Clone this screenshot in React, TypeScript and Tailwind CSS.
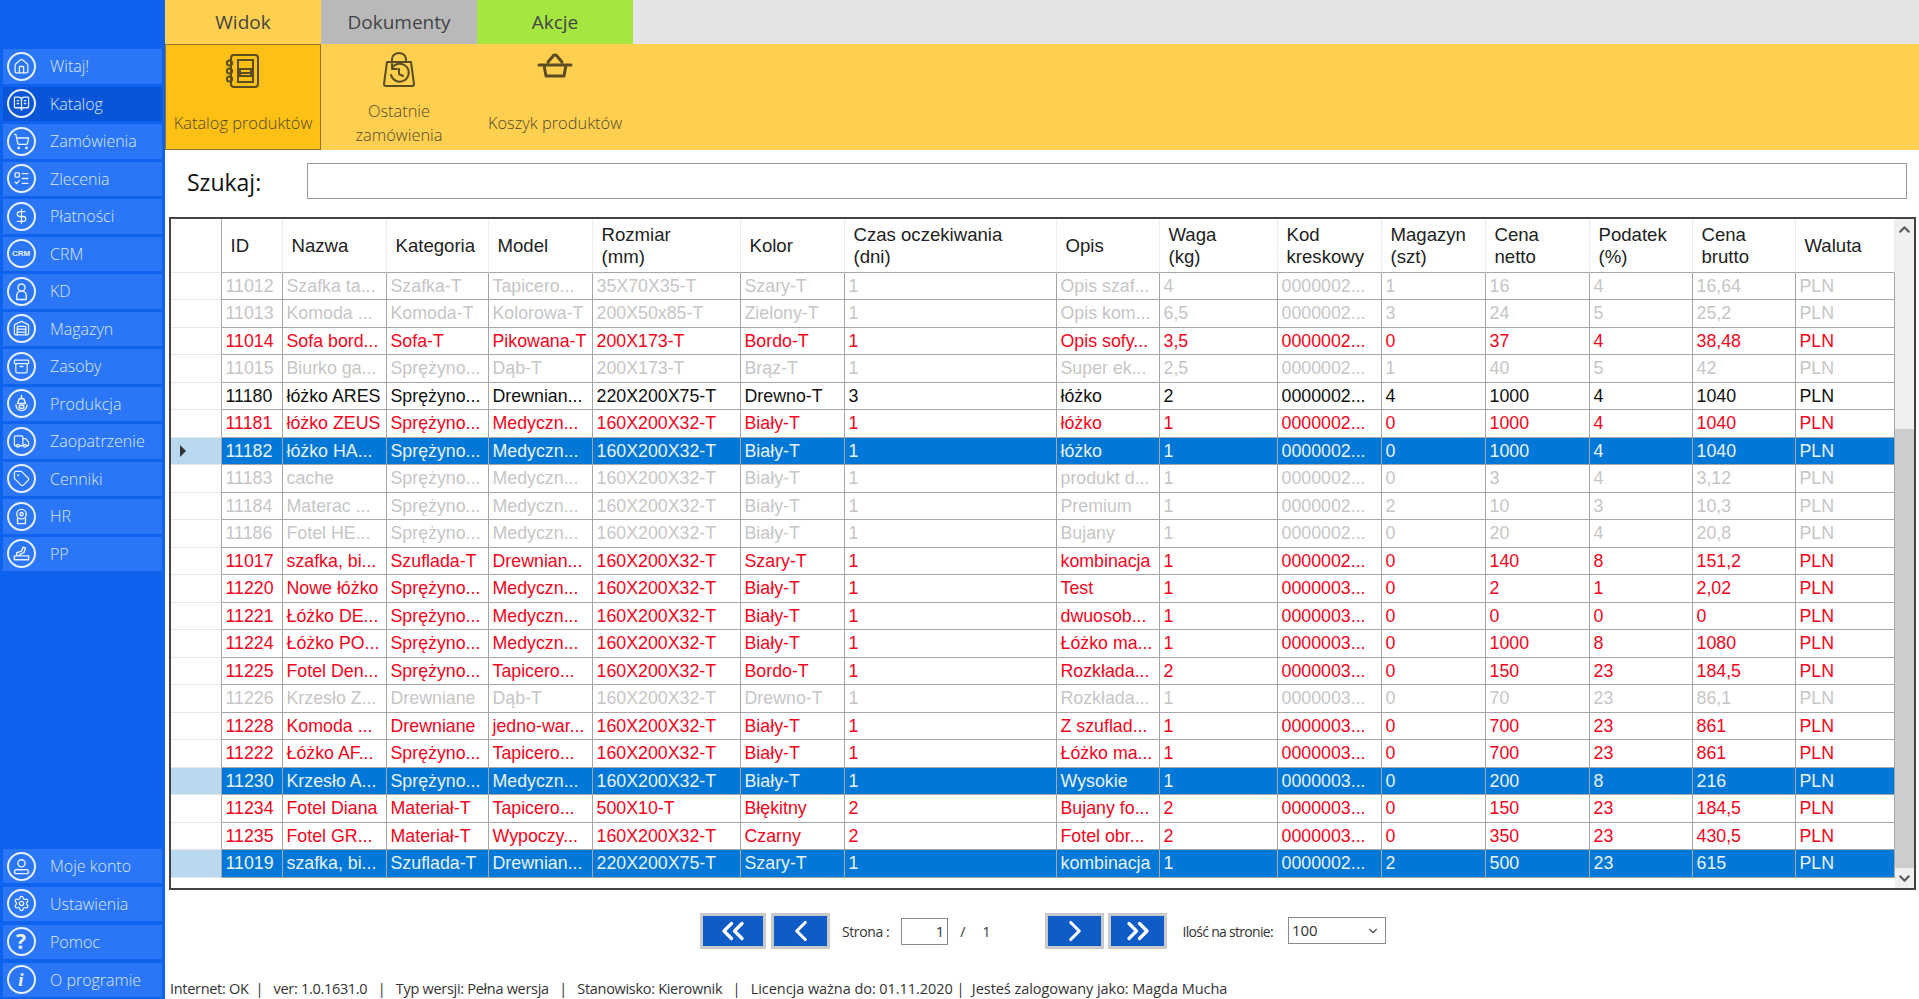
import type { ReactNode } from 'react';
import {
  Archive, BookOpenText, ChevronDown, ChevronLeft, ChevronRight, ChevronUp, ChevronsLeft, ChevronsRight,
  DollarSign, House, ListTodo, Settings, ShoppingCart, Tag, Truck, Warehouse,
} from 'lucide-react';

const gridCols =
  'grid grid-cols-[51px_61px_104px_102px_104px_148px_104px_212px_103px_118px_104px_104px_104px_103px_103px_99px]';

const headers = [
  'ID', 'Nazwa', 'Kategoria', 'Model', 'Rozmiar\n(mm)', 'Kolor', 'Czas oczekiwania\n(dni)', 'Opis', 'Waga\n(kg)',
  'Kod\nkreskowy', 'Magazyn\n(szt)', 'Cena\nnetto', 'Podatek\n(%)', 'Cena\nbrutto', 'Waluta',
];

type Tone = 'gray' | 'red' | 'black' | 'sel';

const S = 'Sprężyno...';
const M = 'Medyczn...';
const R = '160X200X32-T';
const K2 = '0000002...';
const K3 = '0000003...';

const rows: { tone: Tone; cur?: boolean; c: string[] }[] = [
  { tone: 'gray', c: ['11012', 'Szafka ta...', 'Szafka-T', 'Tapicero...', '35X70X35-T', 'Szary-T', '1', 'Opis szaf...', '4', K2, '1', '16', '4', '16,64', 'PLN'] },
  { tone: 'gray', c: ['11013', 'Komoda ...', 'Komoda-T', 'Kolorowa-T', '200X50x85-T', 'Zielony-T', '1', 'Opis kom...', '6,5', K2, '3', '24', '5', '25,2', 'PLN'] },
  { tone: 'red', c: ['11014', 'Sofa bord...', 'Sofa-T', 'Pikowana-T', '200X173-T', 'Bordo-T', '1', 'Opis sofy...', '3,5', K2, '0', '37', '4', '38,48', 'PLN'] },
  { tone: 'gray', c: ['11015', 'Biurko ga...', S, 'Dąb-T', '200X173-T', 'Brąz-T', '1', 'Super ek...', '2,5', K2, '1', '40', '5', '42', 'PLN'] },
  { tone: 'black', c: ['11180', 'łóżko ARES', S, 'Drewnian...', '220X200X75-T', 'Drewno-T', '3', 'łóżko', '2', K2, '4', '1000', '4', '1040', 'PLN'] },
  { tone: 'red', c: ['11181', 'łóżko ZEUS', S, M, R, 'Biały-T', '1', 'łóżko', '1', K2, '0', '1000', '4', '1040', 'PLN'] },
  { tone: 'sel', cur: true, c: ['11182', 'łóżko HA...', S, M, R, 'Biały-T', '1', 'łóżko', '1', K2, '0', '1000', '4', '1040', 'PLN'] },
  { tone: 'gray', c: ['11183', 'cache', S, M, R, 'Biały-T', '1', 'produkt d...', '1', K2, '0', '3', '4', '3,12', 'PLN'] },
  { tone: 'gray', c: ['11184', 'Materac ...', S, M, R, 'Biały-T', '1', 'Premium', '1', K2, '2', '10', '3', '10,3', 'PLN'] },
  { tone: 'gray', c: ['11186', 'Fotel HE...', S, M, R, 'Biały-T', '1', 'Bujany', '1', K2, '0', '20', '4', '20,8', 'PLN'] },
  { tone: 'red', c: ['11017', 'szafka, bi...', 'Szuflada-T', 'Drewnian...', R, 'Szary-T', '1', 'kombinacja', '1', K2, '0', '140', '8', '151,2', 'PLN'] },
  { tone: 'red', c: ['11220', 'Nowe łóżko', S, M, R, 'Biały-T', '1', 'Test', '1', K3, '0', '2', '1', '2,02', 'PLN'] },
  { tone: 'red', c: ['11221', 'Łóżko DE...', S, M, R, 'Biały-T', '1', 'dwuosob...', '1', K3, '0', '0', '0', '0', 'PLN'] },
  { tone: 'red', c: ['11224', 'Łóżko PO...', S, M, R, 'Biały-T', '1', 'Łóżko ma...', '1', K3, '0', '1000', '8', '1080', 'PLN'] },
  { tone: 'red', c: ['11225', 'Fotel Den...', S, 'Tapicero...', R, 'Bordo-T', '1', 'Rozkłada...', '2', K3, '0', '150', '23', '184,5', 'PLN'] },
  { tone: 'gray', c: ['11226', 'Krzesło Z...', 'Drewniane', 'Dąb-T', R, 'Drewno-T', '1', 'Rozkłada...', '1', K3, '0', '70', '23', '86,1', 'PLN'] },
  { tone: 'red', c: ['11228', 'Komoda ...', 'Drewniane', 'jedno-war...', R, 'Biały-T', '1', 'Z szuflad...', '1', K3, '0', '700', '23', '861', 'PLN'] },
  { tone: 'red', c: ['11222', 'Łóżko AF...', S, 'Tapicero...', R, 'Biały-T', '1', 'Łóżko ma...', '1', K3, '0', '700', '23', '861', 'PLN'] },
  { tone: 'sel', c: ['11230', 'Krzesło A...', S, M, R, 'Biały-T', '1', 'Wysokie', '1', K3, '0', '200', '8', '216', 'PLN'] },
  { tone: 'red', c: ['11234', 'Fotel Diana', 'Materiał-T', 'Tapicero...', '500X10-T', 'Błękitny', '2', 'Bujany fo...', '2', K3, '0', '150', '23', '184,5', 'PLN'] },
  { tone: 'red', c: ['11235', 'Fotel GR...', 'Materiał-T', 'Wypoczy...', R, 'Czarny', '2', 'Fotel obr...', '2', K3, '0', '350', '23', '430,5', 'PLN'] },
  { tone: 'sel', c: ['11019', 'szafka, bi...', 'Szuflada-T', 'Drewnian...', '220X200X75-T', 'Szary-T', '1', 'kombinacja', '1', K2, '2', '500', '23', '615', 'PLN'] },
];

const toneClass: Record<Tone, string> = {
  gray: 'text-[#c6c6c6]',
  red: 'text-[#f5051c]',
  black: 'text-[#111111]',
  sel: 'bg-[#0078d7] text-[#e9f3fc]',
};

const ico = { size: 17, strokeWidth: 1.8 };

const Glyph = ({ children }: { children: ReactNode }) => (
  <svg viewBox="0 0 24 24" className="w-[19px] h-[19px]" fill="none" stroke="currentColor" strokeWidth="1.8" strokeLinecap="round" strokeLinejoin="round">
    {children}
  </svg>
);

const topNav: { label: string; icon: ReactNode; active?: boolean }[] = [
  { label: 'Witaj!', icon: <House {...ico} /> },
  { label: 'Katalog', icon: <BookOpenText {...ico} />, active: true },
  { label: 'Zamówienia', icon: <ShoppingCart {...ico} /> },
  { label: 'Zlecenia', icon: <ListTodo {...ico} /> },
  { label: 'Płatności', icon: <DollarSign {...ico} /> },
  { label: 'CRM', icon: <span className="text-[8px] font-bold leading-none [font-family:Liberation_Sans,sans-serif]">CRM</span> },
  {
    label: 'KD',
    icon: (
      <Glyph>
        <circle cx="12" cy="7" r="4.5" />
        <path d="M6 22v-5a6 5.500 0 0 1 12 0v5z" />
      </Glyph>
    ),
  },
  { label: 'Magazyn', icon: <Warehouse {...ico} /> },
  { label: 'Zasoby', icon: <Archive {...ico} /> },
  {
    label: 'Produkcja',
    icon: (
      <Glyph>
        <path d="M12 2v4M9 6h6l2 6H7z" />
        <path d="M5 14a7 7 0 0 0 14 0" />
        <ellipse cx="12" cy="16" rx="3" ry="2" />
      </Glyph>
    ),
  },
  { label: 'Zaopatrzenie', icon: <Truck {...ico} /> },
  { label: 'Cenniki', icon: <Tag {...ico} /> },
  {
    label: 'HR',
    icon: (
      <Glyph>
        <circle cx="12" cy="9" r="6" />
        <circle cx="12" cy="9" r="2" />
        <path d="M7 14v7h10v-7" />
      </Glyph>
    ),
  },
  {
    label: 'PP',
    icon: (
      <Glyph>
        <path d="M3 20v-5h18v5zM6 15v-4l6-2 2-5 3 1-2 6-5 2v2" />
      </Glyph>
    ),
  },
];

const bottomNav: { label: string; icon: ReactNode }[] = [
  {
    label: 'Moje konto',
    icon: (
      <Glyph>
        <circle cx="12" cy="8" r="4.500" />
        <path d="M4 21a3 3 0 0 1 3-5h10a3 3 0 0 1 3 5z" />
      </Glyph>
    ),
  },
  { label: 'Ustawienia', icon: <Settings {...ico} /> },
  { label: 'Pomoc', icon: <span className="text-[21px] font-bold leading-none">?</span> },
  { label: 'O programie', icon: <span className="text-[19px] italic font-bold leading-none [font-family:Liberation_Serif,serif]">i</span> },
];

function NavItem({ label, icon, active }: { label: string; icon: ReactNode; active?: boolean }) {
  return (
    <div className={`h-[34.5px] mx-[3px] flex items-center pl-[3.5px] gap-[14.5px] ${active ? 'bg-[#0a54d8]' : 'bg-[#2b76f6]'}`}>
      <div className="w-[29px] h-[29px] shrink-0 rounded-full border-2 border-[#e6efff] flex items-center justify-center text-[#eaf1ff]">
        {icon}
      </div>
      <span className="text-[16px] font-light text-[#dce8ff] whitespace-nowrap">{label}</span>
    </div>
  );
}

function PagerButton({ children, wide }: { children: ReactNode; wide?: boolean }) {
  return (
    <div className={`h-[36px] border-[3px] border-[#c9c9c9] bg-[#0f5cc7] flex items-center justify-center text-white ${wide ? 'w-[66px]' : 'w-[59px]'}`}>
      {children}
    </div>
  );
}

function RibbonTile({ label, icon, active }: { label: ReactNode; icon: ReactNode; active?: boolean }) {
  return (
    <div className={`w-[156px] h-full flex flex-col items-center ${active ? 'bg-[#fdc015] border border-[#8f7426]' : ''}`}>
      <div className="h-[52px] shrink-0 flex items-center justify-center text-[#5b4c22]">{icon}</div>
      <div className="flex-1 flex items-center justify-center text-center text-[16.4px] leading-[24px] font-light text-[#54492c] whitespace-nowrap">{label}</div>
    </div>
  );
}

export default function App() {
  return (
    <div className="w-[1919px] h-[999px] overflow-hidden flex bg-white [font-family:Open_Sans,sans-serif]">
      <aside className="w-[165px] shrink-0 h-full flex flex-col bg-[#0d63ee] pt-[49px] pb-[2px]">
        <nav className="flex flex-col gap-[3px]">
          {topNav.map((n) => (
            <NavItem key={n.label} {...n} />
          ))}
        </nav>
        <nav className="mt-auto flex flex-col gap-[3.4px]">
          {bottomNav.map((n) => (
            <NavItem key={n.label} {...n} />
          ))}
        </nav>
      </aside>

      <main className="flex-1 min-w-0 flex flex-col">
        <div className="h-[44px] shrink-0 flex bg-[#e4e4e4] text-[19px] text-[#444444]">
          <div className="w-[156px] bg-[#ffd04f] flex items-center justify-center">Widok</div>
          <div className="w-[156px] bg-[#b9b9b9] flex items-center justify-center">Dokumenty</div>
          <div className="w-[156px] bg-[#a5e640] flex items-center justify-center">Akcje</div>
        </div>

        <div className="h-[106px] shrink-0 flex bg-[#ffd04f]">
          <RibbonTile
            active
            label="Katalog produktów"
            icon={
              <svg viewBox="0 0 36 36" className="w-[36px] h-[36px]" fill="none" stroke="currentColor" strokeWidth="2">
                <rect x="6" y="2" width="27" height="32" rx="3" />
                <circle cx="4.5" cy="10" r="2.6" />
                <circle cx="4.5" cy="18" r="2.6" />
                <circle cx="4.5" cy="26" r="2.6" />
                <rect x="13" y="7" width="15" height="22" />
                <path d="M15 20v-4h11v4M15 20h11v3H15z" />
              </svg>
            }
          />
          <RibbonTile
            label={<span>Ostatnie<br />zamówienia</span>}
            icon={
              <svg viewBox="0 0 36 36" className="w-[36px] h-[36px]" fill="none" stroke="currentColor" strokeWidth="2" strokeLinecap="round" strokeLinejoin="round">
                <path d="M6 10h24l3 22a2 2 0 0 1-2 2H5a2 2 0 0 1-2-2z" />
                <path d="M11 10V7a7 6 0 0 1 14 0v3" />
                <path d="M11 16a9 9 0 1 1-1 7M11 12v5h5M18 17v5l4 2" />
              </svg>
            }
          />
          <RibbonTile
            label="Koszyk produktów"
            icon={
              <svg viewBox="0 0 36 36" className="w-[36px] h-[36px] -mt-[8px]" fill="none" stroke="currentColor" strokeWidth="3" strokeLinecap="round" strokeLinejoin="round">
                <path d="M2 17h32M7 17l2 11h18l2-11M11 14l6-7M25 14l-6-7" />
              </svg>
            }
          />
        </div>

        <div className="h-[67px] shrink-0 flex pt-[13px] pl-[22px] pr-[12px]">
          <span className="w-[120px] h-[38px] flex items-center text-[23px] text-[#111111]">Szukaj:</span>
          <input className="flex-1 h-[36px] border border-[#9a9a9a] bg-white" />
        </div>

        <div className="h-[673px] shrink-0 ml-[4px] mr-[3px] border-2 border-[#444444] flex [font-family:Liberation_Sans,Arial,sans-serif]">
          <div className="w-[1724px] shrink-0 flex flex-col">
            <div className={`${gridCols} h-[53.5px] text-[18.6px] leading-[22px] text-[#222222]`}>
              <div className="border-r border-b border-r-[#a6a6a6] border-b-[#e6e6e6]" />
              {headers.map((h) => (
                <div key={h} className="pl-[8.5px] pr-[4px] pt-[2px] flex items-center whitespace-pre-line border-r border-r-[#ececec] border-b border-b-[#a6a6a6]">
                  {h}
                </div>
              ))}
            </div>
            {rows.map((r) => (
              <div key={r.c[0]} className={`${gridCols} h-[27.5px] text-[17.8px] leading-[27px]`}>
                <div className={`border-r border-b border-r-[#a6a6a6] border-b-[#e6e6e6] flex items-center pl-[9px] ${r.tone === 'sel' ? 'bg-[#b9d9f1]' : ''}`}>
                  {r.cur && <span className="w-0 h-0 border-y-[6px] border-y-transparent border-l-[6px] border-l-[#333333]" />}
                </div>
                {r.c.map((v, i) => (
                  <div key={i} className={`pl-[3.5px] border-r border-b border-[#a6a6a6] whitespace-nowrap overflow-hidden ${toneClass[r.tone]}`}>
                    {v}
                  </div>
                ))}
              </div>
            ))}
          </div>
          <div className="w-[22px] ml-auto flex flex-col bg-[#f0f0f0] text-[#606060]">
            <div className="h-[20px] flex items-center justify-center"><ChevronUp size={17} strokeWidth={3} /></div>
            <div className="h-[190px]" />
            <div className="flex-1 bg-[#cdcdcd]" />
            <div className="h-[20px] flex items-center justify-center"><ChevronDown size={17} strokeWidth={3} /></div>
          </div>
        </div>

        <div className="flex-1 flex items-start pt-[23px] text-[14px] text-[#333333]">
          <div className="ml-[535px] flex gap-[5px]">
            <PagerButton wide><ChevronsLeft size={36} strokeWidth={2.2} /></PagerButton>
            <PagerButton><ChevronLeft size={34} strokeWidth={2.2} /></PagerButton>
          </div>
          <div className="ml-[12px] h-[36px] flex items-center tracking-[-0.4px]">Strona :</div>
          <div className="ml-[12px] mt-[5px] w-[47px] h-[27px] border border-[#8a8a8a] flex items-center justify-end pr-[3px] text-[15px]">1</div>
          <div className="ml-[12px] h-[36px] flex items-center">/</div>
          <div className="ml-[17px] h-[36px] flex items-center">1</div>
          <div className="ml-[55px] flex gap-[4px]">
            <PagerButton><ChevronRight size={34} strokeWidth={2.2} /></PagerButton>
            <PagerButton><ChevronsRight size={36} strokeWidth={2.2} /></PagerButton>
          </div>
          <div className="ml-[15px] h-[36px] flex items-center tracking-[-0.7px]">Ilość na stronie:</div>
          <div className="ml-[15px] mt-[4px] w-[98px] h-[27px] border border-[#8a8a8a] flex items-center justify-between pl-[3px] pr-[5px] text-[15px]">
            100<ChevronDown size={14} className="text-[#555555]" />
          </div>
        </div>

        <footer className="h-[21px] shrink-0 pl-[5px] text-[14.5px] leading-[21px] text-[#333333] whitespace-pre tracking-[-0.3px]">
          {'Internet: OK  |   ver: 1.0.1631.0   |   Typ wersji: Pełna wersja   |   Stanowisko: Kierownik   |   '}
          <span className="tracking-[-0.05px]">{'Licencja ważna do: 01.11.2020 |  Jesteś zalogowany jako: Magda Mucha'}</span>
        </footer>
      </main>
    </div>
  );
}
